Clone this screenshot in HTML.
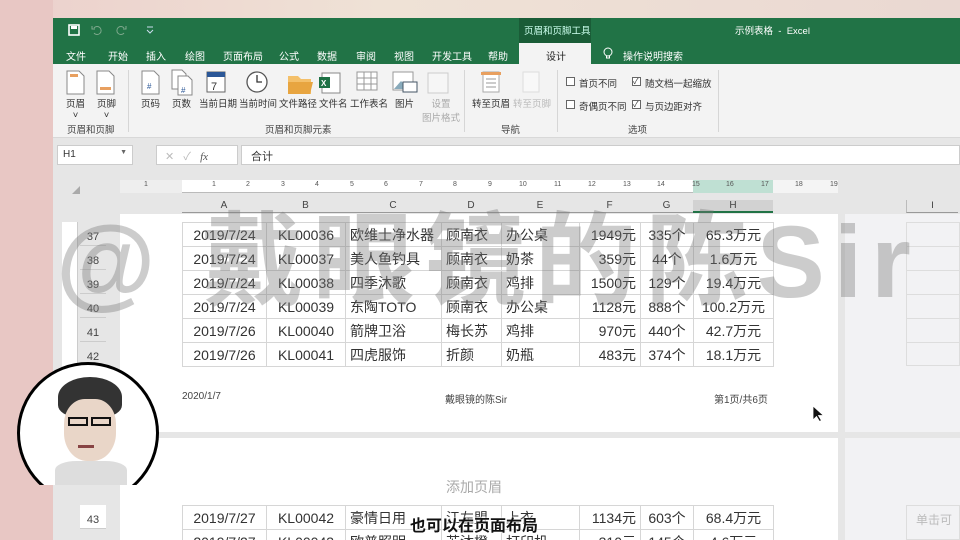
<!DOCTYPE html>
<html style="width:960px;height:540px;overflow:hidden"><head><meta charset="utf-8"><style>
*{margin:0;padding:0;box-sizing:border-box}
body{width:960px;height:540px;overflow:hidden;position:relative;background:#ead6d2;font-family:"Liberation Sans","Noto Sans CJK SC",sans-serif;color:#333}
.a{position:absolute}
.t{font-size:10px;color:#222;white-space:nowrap}
.btn{position:absolute;font-size:9.5px;color:#333;text-align:center;white-space:nowrap}
.grp{position:absolute;top:122px;font-size:9.5px;color:#444}
table{border-collapse:collapse;position:absolute;font-size:14px;color:#333}
td{border:1px solid #d6d6d6;height:24px;padding:0 4px;white-space:nowrap}
.r{text-align:right}.c{text-align:center}
.rn{position:absolute;left:80px;width:26px;font-size:11px;color:#444;text-align:center;border-bottom:1px solid #ccc;height:24px;line-height:30px}
</style></head><body>
<div class="a" style="left:0;top:0;width:960px;height:18px;background:linear-gradient(90deg,#ecd0cc,#efe2d6 40%,#ead8d2)"></div>
<div class="a" style="left:0;top:0;width:53px;height:540px;background:#e8c7c4"></div>
<div class="a" style="left:53px;top:18px;width:907px;height:46px;background:#217346"></div>
<div class="a" style="left:519px;top:18px;width:72px;height:25px;background:#1a5c37"></div>
<div class="a t" style="left:524px;top:23px;color:#cfe;font-size:9.5px">页眉和页脚工具</div>
<div class="a t" style="left:735px;top:23px;color:#fff;font-size:9.5px">示例表格 &nbsp;- &nbsp;Excel</div>
<svg class="a" style="left:68px;top:24px" width="90" height="12"><rect x="1" y="1" width="10" height="10" fill="none" stroke="#fff" stroke-width="1.6"/><rect x="3" y="2" width="6" height="3" fill="#fff"/><path d="M26 4a4 4 0 1 1 0 5M24 2v3h3" stroke="#7fa98d" fill="none"/><path d="M56 4a4 4 0 1 0 0 5M58 2v3h-3" stroke="#7fa98d" fill="none"/><path d="M79 3h6M79 6l3 3 3-3" stroke="#cde" fill="none"/></svg>
<div class="a" style="left:519px;top:43px;width:72px;height:21px;background:#f3f3f3"></div>
<div class="a t" style="left:546px;top:48px">设计</div>
<div class="a t" style="top:48px;left:66px;color:#fff">文件</div>
<div class="a t" style="top:48px;left:108px;color:#fff">开始</div>
<div class="a t" style="top:48px;left:146px;color:#fff">插入</div>
<div class="a t" style="top:48px;left:185px;color:#fff">绘图</div>
<div class="a t" style="top:48px;left:223px;color:#fff">页面布局</div>
<div class="a t" style="top:48px;left:279px;color:#fff">公式</div>
<div class="a t" style="top:48px;left:317px;color:#fff">数据</div>
<div class="a t" style="top:48px;left:356px;color:#fff">审阅</div>
<div class="a t" style="top:48px;left:394px;color:#fff">视图</div>
<div class="a t" style="top:48px;left:432px;color:#fff">开发工具</div>
<div class="a t" style="top:48px;left:488px;color:#fff">帮助</div>
<svg class="a" style="left:602px;top:47px" width="12" height="14"><circle cx="6" cy="5" r="4" fill="none" stroke="#fff"/><path d="M4 11h4M4.5 9v2M7.5 9v2" stroke="#fff"/></svg>
<div class="a t" style="top:48px;left:623px;color:#fff">操作说明搜索</div>
<div class="a" style="left:53px;top:64px;width:907px;height:74px;background:#f3f3f3;border-bottom:1px solid #d8d8d8"></div>
<svg class="a" style="left:60px;top:68px" width="520" height="30">
<g fill="#fff" stroke="#888"><path d="M7 3h12l5 5v18H7z"/><path d="M37 3h12l5 5v18H37z"/><path d="M82 3h12l5 5v18H82z"/><path d="M112 2h10l4 4v15h-14z"/><path d="M118 8h10l4 4v15h-14z"/></g>
<rect x="10" y="6" width="8" height="3" fill="#e8a060"/><rect x="40" y="19" width="11" height="3" fill="#e8a060"/>
<text x="87" y="21" font-size="8" fill="#2b5797">#</text><text x="121" y="25" font-size="8" fill="#2b5797">#</text>
<rect x="147" y="4" width="18" height="20" fill="#fff" stroke="#666"/><rect x="147" y="4" width="18" height="5" fill="#2b5797"/><text x="151" y="22" font-size="11" fill="#333">7</text>
<circle cx="197" cy="14" r="10" fill="#fff" stroke="#555" stroke-width="1.3"/><path d="M197 7v7h5" stroke="#333" fill="none" stroke-width="1.3"/>
<path d="M228 8h10l3 3h10v15h-23z" fill="#f4c06a"/><path d="M228 14h25l-3 12h-22z" fill="#e8a540"/>
<rect x="262" y="5" width="18" height="20" fill="#fff" stroke="#888"/><rect x="259" y="9" width="11" height="11" fill="#1e7145"/><text x="261" y="18" font-size="8" fill="#fff" font-weight="bold">X</text>
<g fill="#fff" stroke="#999"><rect x="297" y="4" width="20" height="18"/><path d="M297 10h20M297 16h20M304 4v18M311 4v18"/></g>
<rect x="333" y="4" width="20" height="18" fill="#fff" stroke="#999"/><path d="M334 21l7-8 6 6 6-4v6z" fill="#8ab"/><rect x="343" y="14" width="14" height="10" fill="#fff" stroke="#456"/>
<rect x="368" y="5" width="20" height="20" fill="#f6f6f6" stroke="#ccc"/>
<rect x="423" y="4" width="16" height="20" fill="#fff" stroke="#aaa"/><rect x="421" y="4" width="20" height="3" fill="#e8a060"/><path d="M426 11h10M426 15h10M426 19h10" stroke="#999"/>
<rect x="463" y="4" width="16" height="20" fill="#f8f8f8" stroke="#ddd"/>
</svg>
<div class="btn" style="left:66px;top:96px">页眉<br>˅</div>
<div class="btn" style="left:97px;top:96px">页脚<br>˅</div>
<div class="btn" style="left:141px;top:96px">页码</div>
<div class="btn" style="left:172px;top:96px">页数</div>
<div class="btn" style="left:199px;top:96px">当前日期</div>
<div class="btn" style="left:239px;top:96px">当前时间</div>
<div class="btn" style="left:279px;top:96px">文件路径</div>
<div class="btn" style="left:319px;top:96px">文件名</div>
<div class="btn" style="left:350px;top:96px">工作表名</div>
<div class="btn" style="left:395px;top:96px">图片</div>
<div class="btn" style="left:422px;top:96px;color:#aaa">设置<br>图片格式</div>
<div class="btn" style="left:472px;top:96px">转至页眉</div>
<div class="btn" style="left:513px;top:96px;color:#bbb">转至页脚</div>
<div class="grp" style="left:67px">页眉和页脚</div>
<div class="grp" style="left:265px">页眉和页脚元素</div>
<div class="grp" style="left:501px">导航</div>
<div class="grp" style="left:628px">选项</div>
<div class="a" style="left:128px;top:70px;width:1px;height:62px;background:#d6d6d6"></div>
<div class="a" style="left:464px;top:70px;width:1px;height:62px;background:#d6d6d6"></div>
<div class="a" style="left:557px;top:70px;width:1px;height:62px;background:#d6d6d6"></div>
<div class="a" style="left:718px;top:70px;width:1px;height:62px;background:#d6d6d6"></div>
<div class="a" style="left:566px;top:77px;width:9px;height:9px;border:1px solid #666;background:#fff"></div>
<div class="a" style="left:566px;top:100px;width:9px;height:9px;border:1px solid #666;background:#fff"></div>
<div class="a" style="left:632px;top:77px;width:9px;height:9px;border:1px solid #666;background:#fff;font-size:8px;line-height:7px">✓</div>
<div class="a" style="left:632px;top:100px;width:9px;height:9px;border:1px solid #666;background:#fff;font-size:8px;line-height:7px">✓</div>
<div class="btn" style="left:579px;top:76px">首页不同</div>
<div class="btn" style="left:579px;top:99px">奇偶页不同</div>
<div class="btn" style="left:645px;top:76px">随文档一起缩放</div>
<div class="btn" style="left:645px;top:99px">与页边距对齐</div>
<div class="a" style="left:53px;top:138px;width:907px;height:402px;background:#e6e6e6"></div>
<div class="a" style="left:57px;top:145px;width:76px;height:20px;background:#fff;border:1px solid #ccc;font-size:10px;padding:3px 5px">H1<span style="float:right;font-size:7px;color:#666">▼</span></div>
<div class="a" style="left:156px;top:145px;width:82px;height:20px;background:#fff;border:1px solid #ccc;font-size:11px;color:#bbb;padding:2px 8px">✕ &nbsp; ✓ &nbsp; <i style="color:#555;font-family:'Liberation Serif'">fx</i></div>
<div class="a" style="left:241px;top:145px;width:719px;height:20px;background:#fff;border:1px solid #ccc;font-size:11px;padding:2px 9px">合计</div>
<div class="a" style="left:72px;top:186px;width:0;height:0;border-left:8px solid transparent;border-bottom:8px solid #aaa"></div>
<div class="a" style="left:120px;top:180px;width:718px;height:13px;background:#fff;border-bottom:1px solid #bbb"></div>
<div class="a" style="left:120px;top:180px;width:62px;height:13px;background:#eee"></div>
<div class="a" style="left:693px;top:180px;width:80px;height:13px;background:#bfe0d3"></div>
<div class="a" style="left:773px;top:180px;width:65px;height:13px;background:#f4f4f4"></div>
<div class="a" style="left:120px;top:181px;font-size:7px;color:#555;width:720px;height:10px">
<span class="a" style="left:24px">1</span><span class="a" style="left:92px">1</span><span class="a" style="left:126px">2</span><span class="a" style="left:161px">3</span><span class="a" style="left:195px">4</span><span class="a" style="left:230px">5</span><span class="a" style="left:264px">6</span><span class="a" style="left:299px">7</span><span class="a" style="left:333px">8</span><span class="a" style="left:368px">9</span><span class="a" style="left:399px">10</span><span class="a" style="left:434px">11</span><span class="a" style="left:468px">12</span><span class="a" style="left:503px">13</span><span class="a" style="left:537px">14</span><span class="a" style="left:572px">15</span><span class="a" style="left:606px">16</span><span class="a" style="left:641px">17</span><span class="a" style="left:675px">18</span><span class="a" style="left:710px">19</span></div>
<div class="a" style="left:182px;top:200px;width:591px;height:13px;font-size:10px;color:#444;border-bottom:1px solid #999">
<span class="a" style="left:0;width:84px;text-align:center">A</span><span class="a" style="left:84px;width:79px;text-align:center">B</span><span class="a" style="left:163px;width:96px;text-align:center">C</span><span class="a" style="left:259px;width:60px;text-align:center">D</span><span class="a" style="left:319px;width:78px;text-align:center">E</span><span class="a" style="left:397px;width:61px;text-align:center">F</span><span class="a" style="left:458px;width:53px;text-align:center">G</span><span class="a" style="left:511px;width:80px;height:13px;text-align:center;background:#d2d2d2;border-bottom:2px solid #217346">H</span></div>
<div class="a" style="left:906px;top:200px;width:52px;height:13px;font-size:9px;text-align:center;border-bottom:1px solid #999;border-left:1px solid #bbb">I</div>
<div class="a" style="left:120px;top:214px;width:718px;height:218px;background:#fff"></div>
<div class="a" style="left:845px;top:214px;width:115px;height:218px;background:#f2f2f4"></div>
<div class="a" style="left:120px;top:438px;width:718px;height:102px;background:#fff"></div>
<div class="a" style="left:845px;top:438px;width:115px;height:102px;background:#f2f2f4"></div>
<div class="a" style="left:906px;top:222px;width:54px;height:144px;border:1px solid #ddd;background:repeating-linear-gradient(#f2f2f4 0 23px,#ddd 23px 24px)"></div>
<div class="a" style="left:906px;top:505px;width:54px;height:35px;border:1px solid #ddd;font-size:12px;color:#bbb;padding:5px 9px;white-space:nowrap;overflow:hidden">单击可</div>
<div class="a" style="left:62px;top:222px;width:16px;height:150px;background:#fff;border-right:1px solid #ccc"></div>
<div class="rn" style="top:222px">37</div><div class="rn" style="top:246px">38</div><div class="rn" style="top:270px">39</div><div class="rn" style="top:294px">40</div><div class="rn" style="top:318px">41</div><div class="rn" style="top:342px">42</div>
<div class="rn" style="top:505px;background:#fff">43</div>
<table style="left:182px;top:222px">
<colgroup><col style="width:84px"><col style="width:79px"><col style="width:96px"><col style="width:60px"><col style="width:78px"><col style="width:61px"><col style="width:53px"><col style="width:80px"></colgroup>
<tr><td class="c">2019/7/24</td><td class="c">KL00036</td><td>欧维士净水器</td><td>顾南衣</td><td>办公桌</td><td class="r">1949元</td><td class="c">335个</td><td class="c">65.3万元</td></tr>
<tr><td class="c">2019/7/24</td><td class="c">KL00037</td><td>美人鱼钓具</td><td>顾南衣</td><td>奶茶</td><td class="r">359元</td><td class="c">44个</td><td class="c">1.6万元</td></tr>
<tr><td class="c">2019/7/24</td><td class="c">KL00038</td><td>四季沐歌</td><td>顾南衣</td><td>鸡排</td><td class="r">1500元</td><td class="c">129个</td><td class="c">19.4万元</td></tr>
<tr><td class="c">2019/7/24</td><td class="c">KL00039</td><td>东陶TOTO</td><td>顾南衣</td><td>办公桌</td><td class="r">1128元</td><td class="c">888个</td><td class="c">100.2万元</td></tr>
<tr><td class="c">2019/7/26</td><td class="c">KL00040</td><td>箭牌卫浴</td><td>梅长苏</td><td>鸡排</td><td class="r">970元</td><td class="c">440个</td><td class="c">42.7万元</td></tr>
<tr><td class="c">2019/7/26</td><td class="c">KL00041</td><td>四虎服饰</td><td>折颜</td><td>奶瓶</td><td class="r">483元</td><td class="c">374个</td><td class="c">18.1万元</td></tr>
</table>
<div class="a t" style="left:182px;top:391px;color:#444">2020/1/7</div>
<div class="a t" style="left:445px;top:391px;color:#444">戴眼镜的陈Sir</div>
<div class="a t" style="left:714px;top:391px;color:#444">第1页/共6页</div>
<div class="a" style="left:446px;top:477px;font-size:14px;color:#aaa">添加页眉</div>
<div class="a" style="left:0;top:505px;width:960px;height:35px;overflow:hidden">
<table style="left:182px;top:0">
<colgroup><col style="width:84px"><col style="width:79px"><col style="width:96px"><col style="width:60px"><col style="width:78px"><col style="width:61px"><col style="width:53px"><col style="width:80px"></colgroup>
<tr><td class="c">2019/7/27</td><td class="c">KL00042</td><td>豪情日用</td><td>江左盟</td><td>上衣</td><td class="r">1134元</td><td class="c">603个</td><td class="c">68.4万元</td></tr>
<tr><td class="c">2019/7/27</td><td class="c">KL00043</td><td>欧普照明</td><td>苏沐橙</td><td>打印机</td><td class="r">310元</td><td class="c">145个</td><td class="c">4.6万元</td></tr>
</table></div>
<svg class="a" style="left:812px;top:405px" width="12" height="18"><path d="M1 1v14l3.5-3.5 3 5 2-1-3-5h5z" fill="#111" stroke="#fff" stroke-width=".8"/></svg>
<div class="a" style="left:56px;top:180px;font-size:102px;font-weight:bold;color:rgba(120,120,120,.38);white-space:nowrap;letter-spacing:9px;font-family:'Liberation Sans','Noto Sans CJK SC',sans-serif">@ 戴眼镜的陈Sir</div>
<div class="a" style="left:17px;top:362px;width:142px;height:142px;border-radius:50%;border:3px solid #000;background:#fff;overflow:hidden;clip-path:inset(0 0 19px 0)">
<div class="a" style="left:38px;top:12px;width:64px;height:40px;border-radius:50% 50% 30% 30%;background:#333"></div>
<div class="a" style="left:44px;top:34px;width:52px;height:62px;border-radius:40% 40% 45% 45%;background:#e9d6c8"></div>
<div class="a" style="left:48px;top:52px;width:20px;height:9px;border:2px solid #111"></div>
<div class="a" style="left:71px;top:52px;width:20px;height:9px;border:2px solid #111"></div>
<div class="a" style="left:58px;top:80px;width:16px;height:3px;background:#844"></div>
<div class="a" style="left:35px;top:96px;width:72px;height:30px;background:#ddd;border-radius:30% 30% 0 0"></div>
</div>
<div class="a" style="left:410px;top:512px;font-size:16px;color:#111;font-weight:bold;text-shadow:0 0 2px #fff,0 0 2px #fff">也可以在页面布局</div>
</body></html>
